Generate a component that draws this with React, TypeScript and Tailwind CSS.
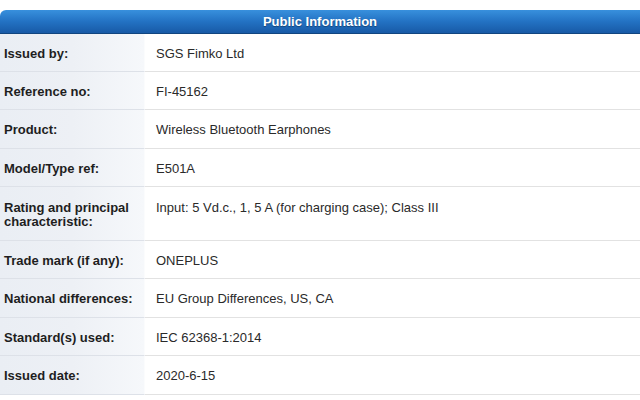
const rows: { label: string[]; value: string; h: string }[] = [
  { label: ['Issued by:'], value: 'SGS Fimko Ltd', h: 'h-[38px]' },
  { label: ['Reference no:'], value: 'FI-45162', h: 'h-[38px]' },
  { label: ['Product:'], value: 'Wireless Bluetooth Earphones', h: 'h-[39px]' },
  { label: ['Model/Type ref:'], value: 'E501A', h: 'h-[38px]' },
  {
    label: ['Rating and principal', 'characteristic:'],
    value: 'Input: 5 Vd.c., 1, 5 A (for charging case); Class III',
    h: 'h-[54px]',
  },
  { label: ['Trade mark (if any):'], value: 'ONEPLUS', h: 'h-[38px]' },
  { label: ['National differences:'], value: 'EU Group Differences, US, CA', h: 'h-[39px]' },
  { label: ['Standard(s) used:'], value: 'IEC 62368-1:2014', h: 'h-[38px]' },
  { label: ['Issued date:'], value: '2020-6-15', h: 'h-[39px]' },
];

export default function App() {
  return (
    <div
      className="w-[640px] h-[400px] bg-white overflow-hidden"
      style={{ fontFamily: '"Liberation Sans", Arial, sans-serif' }}
    >
      <div className="h-[10px]" />
      <div className="h-[24px] flex items-center justify-center rounded-tl-[6px] bg-gradient-to-b from-[#3890dd] via-[#2372c3] to-[#185aa6] border-b border-[#11457f]">
        <span className="text-[13px] font-bold text-white leading-none [text-shadow:0_1px_1px_rgba(0,0,0,0.35)]">
          Public Information
        </span>
      </div>
      <div className="flex flex-col">
        {rows.map((r, i) => {
          const multi = r.label.length > 1;
          return (
            <div key={i} className={`flex ${r.h}`}>
              <div
                className={`w-[145px] shrink-0 px-[4px] bg-gradient-to-r from-[#eaeef4] via-[#edf0f5] to-[#f6f8fb] border-b border-[#dde1e8] border-r border-r-[#fbfcfd] flex ${
                  multi ? 'flex-col justify-start pt-[14px]' : 'items-center pt-[2px]'
                }`}
              >
                {r.label.map((l) => (
                  <div key={l} className="text-[13px] font-bold text-[#1e1e1e] leading-[14px]">
                    {l}
                  </div>
                ))}
              </div>
              <div
                className={`flex-1 pl-[11px] border-b border-[#e2e2e2] flex ${
                  multi ? 'items-start pt-[14px]' : 'items-center pt-[2px]'
                }`}
              >
                <span className="text-[13px] text-[#2a2a2a] leading-[14px]">{r.value}</span>
              </div>
            </div>
          );
        })}
      </div>
    </div>
  );
}
